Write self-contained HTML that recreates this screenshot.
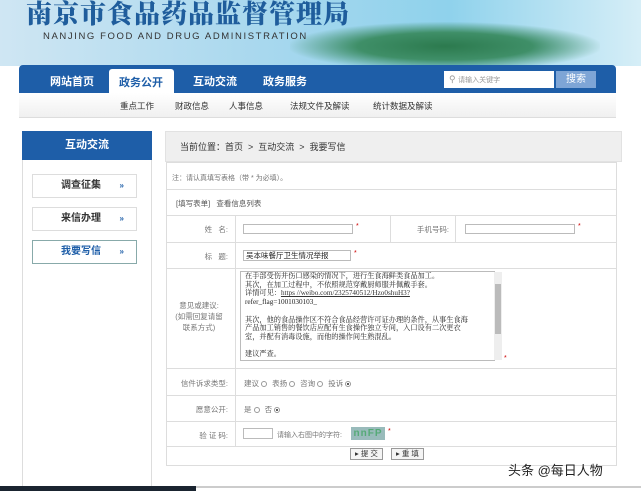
<!DOCTYPE html>
<html><head><meta charset="utf-8"><style>
*{margin:0;padding:0;box-sizing:border-box}
body{width:641px;height:491px;overflow:hidden;background:#fff;font-family:"Liberation Sans","Noto Sans CJK SC",sans-serif;position:relative;font-size:8px;color:#666}
.a{position:absolute}
.banner{left:0;top:0;width:641px;height:66px;background:linear-gradient(90deg,#cfe6f3 0%,#a9d8ee 40%,#8fd2ec 70%,#d6eef7 100%)}
.hill{left:290px;top:22px;width:310px;height:44px;background:radial-gradient(ellipse at 50% 55%,#2c7a4e 0%,#3f8f68 40%,rgba(100,170,190,0) 72%)}
.title{left:26px;top:-6px;font-family:"Noto Serif CJK SC",serif;font-weight:900;font-size:26px;color:#1f5d9c;letter-spacing:1px;white-space:nowrap}
.sub{left:43px;top:31px;font-size:9.5px;color:#333;letter-spacing:1.6px}
.nav{left:19px;top:65px;width:597px;height:28px;background:#1e5ea8;border-radius:4px 4px 0 0}
.nav span{position:absolute;top:8px;color:#fff;font-weight:bold;font-size:11px}
.act{left:109px;top:69px;width:65px;height:25px;background:#fff;border-radius:3px 3px 0 0}
.subm{left:19px;top:93px;width:597px;height:25px;background:linear-gradient(#fff,#f0f0f0);border-bottom:1px solid #ddd}
.subm span{position:absolute;top:7px;font-size:8.5px;color:#333}
.lp{left:22px;top:131px;width:130px;height:360px;border:1px solid #ddd;border-top:none}
.lh{left:22px;top:131px;width:130px;height:29px;background:#1e5ea8;color:#fff;font-weight:bold;font-size:11px;text-align:center;line-height:29px}
.li{left:32px;width:105px;height:24px;border:1px solid #ddd;background:#fff;font-size:10px;font-weight:bold;color:#333;line-height:22px;padding-left:28px}
.li b{position:absolute;right:12px;color:#1e5ea8;font-size:8px}
.bc{left:165px;top:131px;width:457px;height:31px;background:#efefef;border:1px solid #e2e2e2;font-size:9px;color:#333;line-height:30px;padding-left:14px}
.fm{left:166px;top:162px;width:451px;height:304px;border:1px solid #ddd}
.hl{position:absolute;left:166px;width:451px;height:1px;background:#ddd}
.vl{position:absolute;width:1px;background:#ddd}
.lb{position:absolute;font-size:7.5px;color:#777;text-align:right}
.in{position:absolute;height:10px;border:1px solid #bbb;background:#fff}
.st{position:absolute;font-size:7px;color:#c00}
.ta{left:240px;top:271px;width:255px;height:90px;border:1px solid #bbb;background:#fff;font-size:7.2px;line-height:8.7px;color:#222;padding:0 4px;white-space:nowrap;overflow:hidden;font-family:"Liberation Serif","Noto Serif CJK SC",serif}
.ta u{color:#333}
.sb{left:494px;top:272px;width:8px;height:88px;background:#eee}
.sb i{position:absolute;left:1px;top:12px;width:6px;height:50px;background:#bbb}
.rd{display:inline-block;width:6px;height:6px;border:1px solid #999;border-radius:50%;vertical-align:-1px;margin:0 3px 0 2px}
.rd.on{background:radial-gradient(#444 35%,#fff 40%)}
.btn{position:absolute;top:448px;height:12px;border:1px solid #999;background:#f4f4f4;font-size:7.5px;color:#333;line-height:10px;padding:0 4px}
.wm{left:508px;top:460px;font-size:13px;color:#222;white-space:nowrap}
</style></head><body>
<div class="a banner"></div><div class="a hill"></div>
<div class="a title">南京市食品药品监督管理局</div>
<div class="a sub">NANJING FOOD AND DRUG ADMINISTRATION</div>
<div class="a nav"><span style="left:31px">网站首页</span><span style="left:174px">互动交流</span><span style="left:244px">政务服务</span></div>
<div class="a act"></div><div class="a" style="left:119px;top:74px;font-weight:bold;font-size:11px;color:#1e5ea8">政务公开</div>
<div class="a" style="left:444px;top:71px;width:110px;height:17px;background:#fff"></div>
<div class="a" style="left:449px;top:74px;font-size:9px;color:#999">⚲ <span style="font-size:7px">请输入关键字</span></div>
<div class="a" style="left:556px;top:71px;width:40px;height:17px;background:#7ea5d6;color:#fff;font-size:10px;text-align:center;line-height:17px">搜索</div>
<div class="a subm"><span style="left:101px">重点工作</span><span style="left:156px">财政信息</span><span style="left:210px">人事信息</span><span style="left:271px">法规文件及解读</span><span style="left:354px">统计数据及解读</span></div>
<div class="a lp"></div>
<div class="a lh">互动交流</div>
<div class="a li" style="top:174px">调查征集<b>»</b></div>
<div class="a li" style="top:207px">来信办理<b>»</b></div>
<div class="a li" style="top:240px;border-color:#8aa;color:#1e5ea8">我要写信<b>»</b></div>
<div class="a bc">当前位置：首页 &nbsp;&gt;&nbsp; 互动交流 &nbsp;&gt;&nbsp; 我要写信</div>
<div class="a fm"></div>
<div class="hl" style="top:189px"></div><div class="hl" style="top:215px"></div><div class="hl" style="top:242px"></div><div class="hl" style="top:268px"></div><div class="hl" style="top:368px"></div><div class="hl" style="top:395px"></div><div class="hl" style="top:421px"></div><div class="hl" style="top:446px"></div>
<div class="vl" style="left:235px;top:215px;height:231px"></div>
<div class="vl" style="left:390px;top:215px;height:27px"></div><div class="vl" style="left:455px;top:215px;height:27px"></div>
<div class="a" style="left:172px;top:173px;font-size:7px;color:#777">注：请认真填写表格（带 * 为必填）。</div>
<div class="a" style="left:176px;top:198px;font-size:7.5px;color:#555">[填写表单] &nbsp; 查看信息列表</div>
<div class="lb" style="left:170px;top:224px;width:58px">姓 &nbsp; 名:</div>
<div class="in" style="left:243px;top:224px;width:110px"></div><div class="st" style="left:356px;top:223px">*</div>
<div class="lb" style="left:392px;top:224px;width:57px">手机号码:</div>
<div class="in" style="left:465px;top:224px;width:110px"></div><div class="st" style="left:578px;top:223px">*</div>
<div class="lb" style="left:170px;top:251px;width:58px">标 &nbsp; 题:</div>
<div class="in" style="left:243px;top:250px;width:108px;height:11px;font-size:7.5px;color:#222;line-height:9px;padding-left:2px">吴本味餐厅卫生情况举报</div><div class="st" style="left:354px;top:250px">*</div>
<div class="lb" style="left:170px;top:300px;width:58px;line-height:11px;text-align:center">意见或建议:<br>(如需回复请留<br>联系方式)</div>
<div class="a ta">在手部受伤并伤口感染的情况下，进行生食海鲜类食品加工。<br>其次，在加工过程中，不依照规范穿戴厨师服并佩戴手套。<br>详情可见：<u>https //weibo.com/2325740512/Hzo0shuH3?</u><br>refer_flag=1001030103_<br><br>其次，他的食品操作区不符合食品经营许可证办理的条件，从事生食海<br>产品加工销售的餐饮店应配有生食操作独立专间，入口设有二次更衣<br>室，并配有消毒设施，而他的操作间生熟混乱。<br><br>建议严查。</div>
<div class="a sb"><i></i></div><div class="st" style="left:504px;top:355px">*</div>
<div class="lb" style="left:170px;top:378px;width:58px">信件诉求类型:</div>
<div class="a" style="left:244px;top:378px;font-size:7.5px;color:#777">建议<span class="rd"></span> 表扬<span class="rd"></span> 咨询<span class="rd"></span> 投诉<span class="rd on"></span></div>
<div class="lb" style="left:170px;top:404px;width:58px">愿意公开:</div>
<div class="a" style="left:244px;top:404px;font-size:7.5px;color:#777">是<span class="rd"></span> 否<span class="rd on"></span></div>
<div class="lb" style="left:170px;top:430px;width:58px">验 证 码:</div>
<div class="in" style="left:243px;top:428px;width:30px;height:11px"></div>
<div class="a" style="left:277px;top:430px;font-size:7px;color:#777">请输入右图中的字符:</div>
<div class="a" style="left:351px;top:427px;width:34px;height:13px;background:#9bb;color:#5a7;font-size:10px;font-weight:bold;line-height:13px;text-align:center;letter-spacing:1px">nnFP</div>
<div class="st" style="left:388px;top:428px">*</div>
<div class="btn" style="left:350px">▸ 提 交</div><div class="btn" style="left:391px">▸ 重 填</div>
<div class="a wm">头条 @每日人物</div>
<div class="a" style="left:0;top:486px;width:196px;height:5px;background:#1a2430"></div>
<div class="a" style="left:196px;top:486px;width:445px;height:2px;background:#ccc"></div>
</body></html>
